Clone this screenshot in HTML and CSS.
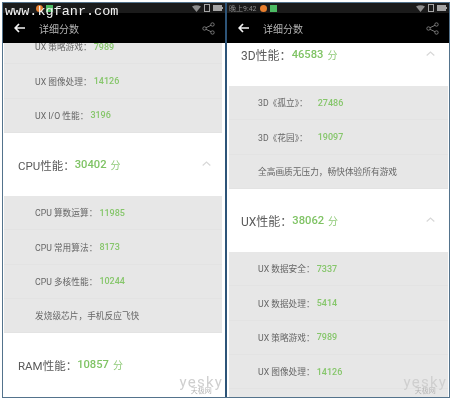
FILE: index.html
```html
<!DOCTYPE html>
<html lang="zh-CN">
<head>
    <meta charset="UTF-8">
    <meta name="viewport" content="width=device-width, initial-scale=1.0">
    <title>详细分数</title>
    <link rel="stylesheet" href="styles.css">
</head>
<body>
<div class="shot">
    <!-- left phone -->
    <div class="phone">
        <div class="status">
            <span class="time"></span>
            <i class="dot"></i>
            <i class="square"></i>
            <span class="status-icons">
                <svg width="9" height="7" viewBox="0 0 9 7"><path d="M0 1.5Q4.5-1 9 1.5L4.5 7z" fill="#8d8d8d"/></svg>
                <svg width="6" height="8" viewBox="0 0 6 8"><rect x=".5" y=".5" width="5" height="7" fill="none" stroke="#a5a5a5"/></svg>
                <svg width="10" height="6" viewBox="0 0 10 6"><rect width="9" height="6" fill="#a5a5a5"/><rect x="9" y="2" width="1" height="2" fill="#a5a5a5"/></svg>
            </span>
        </div>
        <div class="toolbar">
            <svg class="back" width="11" height="10" viewBox="0 0 11 10"><path d="M5 1 1.2 5 5 9M1.2 5H11" fill="none" stroke="#f2f2f2" stroke-width="1.7"/></svg>
            <span class="title">详细分数</span>
            <svg class="share" width="13" height="13" viewBox="0 0 13 13"><g fill="none" stroke="#777"><circle cx="2.5" cy="6.5" r="1.7"/><circle cx="10.5" cy="2.5" r="1.7"/><circle cx="10.5" cy="10.5" r="1.7"/><path d="M4 5.7 9 3.3M4 7.3 9 9.7"/></g></svg>
        </div>
        <div class="view">
            <div class="scroll scroll-left">
                <div class="rows">
                    <div class="row">UX 策略游戏：<b>7989</b></div>
                    <div class="row">UX 图像处理：<b>14126</b></div>
                    <div class="row">UX I/O 性能：<b>3196</b></div>
                </div>
                <div class="head">
                    <span>CPU性能：</span><b>30402</b><em>分</em>
                    <svg class="chev" width="9" height="5" viewBox="0 0 9 5"><path d="M.7 4.5 4.5 1 8.3 4.5" fill="none" stroke="#d8d8d8" stroke-width="1.2"/></svg>
                </div>
                <div class="rows">
                    <div class="row">CPU 算数运算：<b>11985</b></div>
                    <div class="row">CPU 常用算法：<b>8173</b></div>
                    <div class="row">CPU 多核性能：<b>10244</b></div>
                    <div class="row">发烧级芯片，手机反应飞快</div>
                </div>
                <div class="head">
                    <span>RAM性能：</span><b>10857</b><em>分</em>
                </div>
            </div>
            <div class="mark"><span>yesky</span><small>天极网</small></div>
        </div>
        <div class="url">www.kgfanr.com</div>
    </div>

    <div class="divider"></div>

    <!-- right phone -->
    <div class="phone phone-right">
        <div class="status">
            <span class="time">晚上9:42</span>
            <i class="dot"></i>
            <i class="square"></i>
            <span class="status-icons">
                <svg width="9" height="7" viewBox="0 0 9 7"><path d="M0 1.5Q4.5-1 9 1.5L4.5 7z" fill="#8d8d8d"/></svg>
                <svg width="6" height="8" viewBox="0 0 6 8"><rect x=".5" y=".5" width="5" height="7" fill="none" stroke="#a5a5a5"/></svg>
                <svg width="10" height="6" viewBox="0 0 10 6"><rect width="9" height="6" fill="#a5a5a5"/><rect x="9" y="2" width="1" height="2" fill="#a5a5a5"/></svg>
            </span>
        </div>
        <div class="toolbar">
            <svg class="back" width="11" height="10" viewBox="0 0 11 10"><path d="M5 1 1.2 5 5 9M1.2 5H11" fill="none" stroke="#f2f2f2" stroke-width="1.7"/></svg>
            <span class="title">详细分数</span>
            <svg class="share" width="13" height="13" viewBox="0 0 13 13"><g fill="none" stroke="#777"><circle cx="2.5" cy="6.5" r="1.7"/><circle cx="10.5" cy="2.5" r="1.7"/><circle cx="10.5" cy="10.5" r="1.7"/><path d="M4 5.7 9 3.3M4 7.3 9 9.7"/></g></svg>
        </div>
        <div class="view">
            <div class="scroll scroll-right">
                <div class="head">
                    <span>3D性能：</span><b>46583</b><em>分</em>
                    <svg class="chev" width="9" height="5" viewBox="0 0 9 5"><path d="M.7 4.5 4.5 1 8.3 4.5" fill="none" stroke="#d8d8d8" stroke-width="1.2"/></svg>
                </div>
                <div class="rows">
                    <div class="row row-3d">3D《孤立》：<b>27486</b></div>
                    <div class="row row-3d">3D《花园》：<b>19097</b></div>
                    <div class="row">全高画质无压力，畅快体验所有游戏</div>
                </div>
                <div class="head">
                    <span>UX性能：</span><b>38062</b><em>分</em>
                    <svg class="chev" width="9" height="5" viewBox="0 0 9 5"><path d="M.7 4.5 4.5 1 8.3 4.5" fill="none" stroke="#d8d8d8" stroke-width="1.2"/></svg>
                </div>
                <div class="rows rows-open">
                    <div class="row">UX 数据安全：<b>7337</b></div>
                    <div class="row">UX 数据处理：<b>5414</b></div>
                    <div class="row">UX 策略游戏：<b>7989</b></div>
                    <div class="row">UX 图像处理：<b>14126</b></div>
                </div>
            </div>
            <div class="mark"><span>yesky</span><small>天极网</small></div>
        </div>
    </div>
</div>
</body>
</html>
```

FILE: styles.css
```css
html, body {
    margin: 0;
    background: #fff;
}

body {
    width: 452px;
    height: 400px;
    padding: 2px;
    box-sizing: border-box;
    overflow: hidden;
    font-family: Roboto, "Noto Sans CJK SC", sans-serif;
}

.shot {
    display: flex;
    height: 396px;
    width: 448px;
    box-sizing: border-box;
    border: 1px solid #54738c;
    filter: blur(0.5px);
}

.phone {
    position: relative;
    flex: 1;
    display: flex;
    flex-direction: column;
    min-width: 0;
    background: #fff;
}

.divider {
    width: 2px;
    background: #2d5478;
}

/* status bar */
.status {
    display: flex;
    align-items: center;
    height: 10px;
    padding: 0 2px;
    background: #1b1b1b;
}

.time {
    width: 30px;
    font-size: 7px;
    color: #8c8c8c;
    white-space: nowrap;
}

.dot {
    width: 7px;
    height: 7px;
    margin-left: 1px;
    border-radius: 50%;
    background: #e87f2e;
}

.square {
    width: 7px;
    height: 7px;
    margin-left: 3px;
    background: #4cbb63;
}

.status-icons {
    display: flex;
    align-items: center;
    gap: 3px;
    margin-left: auto;
}

/* toolbar */
.toolbar {
    display: flex;
    align-items: center;
    height: 30px;
    padding: 0 10px 0 11px;
    background: #000;
}

.title {
    margin-left: 14px;
    font-size: 10px;
    color: #b5b5b5;
}

.share {
    margin-left: auto;
}

/* scrolled content */
.view {
    position: relative;
    flex: 1;
    overflow: hidden;
}

.scroll-left {
    margin-top: -13px;
}

.scroll-right {
    margin-top: -20px;
}

.head {
    display: flex;
    align-items: center;
    height: 63px;
    padding: 0 14px 0 15px;
    font-size: 11.5px;
    color: #5a5a5a;
}

.head span {
    white-space: nowrap;
}

.head b {
    font-size: 11.2px;
    font-weight: 500;
    color: #7fc364;
}

.head em {
    margin-left: 4px;
    font-style: normal;
    font-size: 10px;
    color: #8fca78;
}

.chev {
    margin-left: auto;
    margin-bottom: 3px;
}

.rows {
    margin: 0 3px 0 1px;
    background: #e7e7e7;
}

.rows-open {
    padding-bottom: 12px;
}

.row {
    display: flex;
    align-items: center;
    height: 34.35px;
    padding-left: 31px;
    font-size: 8.7px;
    color: #666;
    white-space: nowrap;
    box-sizing: border-box;
    border-bottom: 1px solid #e3e3e3;
}

.row b {
    margin-left: 2px;
    font-size: 9px;
    font-weight: 500;
    color: #86c66b;
}

.row-3d b {
    margin-left: 10px;
}

.phone-right .head {
    padding-left: 14px;
    font-size: 12px;
}

.phone-right .rows {
    margin: 0 1px 0 2px;
}

.phone-right .row {
    padding-left: 29px;
}

/* overlays */
.url {
    position: absolute;
    left: 2px;
    top: 1px;
    font-family: "Liberation Mono", monospace;
    font-size: 13.5px;
    line-height: 15px;
    color: #f4f4f4;
}

.mark {
    position: absolute;
    right: 2px;
    bottom: 2px;
    display: flex;
    flex-direction: column;
    align-items: center;
    color: #cfcfcf;
}

.mark span {
    font-size: 15px;
    line-height: 12px;
    letter-spacing: 1.2px;
}

.mark small {
    font-size: 7px;
    line-height: 7px;
    color: #b5b5b5;
}
```
